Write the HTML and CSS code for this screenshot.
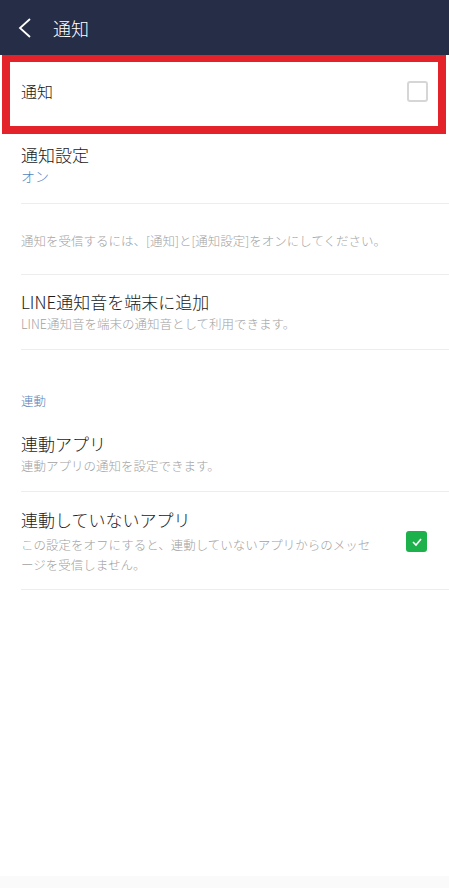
FILE: index.html
```html
<!doctype html>
<html lang="ja">
<head>
    <meta charset="UTF-8">
    <meta name="viewport" content="width=device-width, initial-scale=1.0">
    <title>通知</title>
    <link rel="stylesheet" href="styles.css">
</head>
<body>

<div class="screen">
    <div class="top-bar">
        <svg class="back" width="20" height="24" viewBox="0 0 20 24">
            <polyline points="12,3 2,12 12,21" fill="none" stroke="#fff" stroke-width="1.8"/>
        </svg>
        <span class="top-title">通知</span>
    </div>

    <div class="settings">
        <div class="mark">
            <div class="row row-main">
                <span class="main-label">通知</span>
                <span class="check"></span>
            </div>
        </div>

        <div class="row row-setting">
            <div class="texts">
                <div class="title">通知設定</div>
                <div class="value">オン</div>
            </div>
        </div>

        <div class="note">通知を受信するには、[通知]と[通知設定]をオンにしてください。</div>

        <div class="row row-sound">
            <div class="texts">
                <div class="title">LINE通知音を端末に追加</div>
                <div class="sub">LINE通知音を端末の通知音として利用できます。</div>
            </div>
        </div>

        <div class="section">連動</div>

        <div class="row row-apps">
            <div class="texts">
                <div class="title">連動アプリ</div>
                <div class="sub">連動アプリの通知を設定できます。</div>
            </div>
        </div>

        <div class="row row-other">
            <div class="texts">
                <div class="title">連動していないアプリ</div>
                <div class="sub">この設定をオフにすると、連動していないアプリからのメッセ<br>ージを受信しません。</div>
            </div>
            <span class="check on">
                <svg width="12" height="10" viewBox="0 0 12 10">
                    <polyline points="2,5 5,8 10,2" fill="none" stroke="#fff" stroke-width="1.6"/>
                </svg>
            </span>
        </div>
    </div>

    <div class="nav-strip"></div>
</div>

</body>
</html>
```

FILE: styles.css
```css
* {
    padding: 0;
    margin: 0;
    box-sizing: border-box;
}

body {
    font-family: "Noto Sans CJK JP", "Noto Sans", sans-serif;
    font-weight: 300;
    background-color: #ffffff;
    color: #1a1a1a;
}

.screen {
    width: 449px;
    height: 888px;
    display: flex;
    flex-direction: column;
}

.top-bar {
    height: 55px;
    flex-shrink: 0;
    background-color: #252d47;
    display: flex;
    align-items: center;
    padding-left: 18px;
}

.top-bar .back {
    display: block;
    margin-right: 15px;
}

.top-bar .top-title {
    color: #ffffff;
    font-size: 18px;
    line-height: 24px;
}

.settings {
    flex: 1;
}

/* red frame around the first row */
.mark {
    margin: 0 3px 0 2px;
    border: 8px solid #e42229;
    border-top-width: 7px;
}

.row {
    display: flex;
    align-items: center;
    margin-left: 21px;
    padding-right: 22px;
    border-bottom: 1px solid #ededed;
}

.row-main {
    height: 64px;
    margin-left: 0;
    padding: 0 10px 6px 11px;
    border-bottom: none;
    justify-content: space-between;
}

.main-label {
    font-size: 16px;
    line-height: 22px;
}

.check {
    width: 21px;
    height: 21px;
    border: 2px solid #d6d6d6;
    border-radius: 3px;
    flex-shrink: 0;
}

.check.on {
    border: none;
    background-color: #1db14b;
    display: flex;
    align-items: center;
    justify-content: center;
}

.texts {
    flex: 1;
}

.title {
    font-size: 17px;
    line-height: 24px;
}

.value {
    font-size: 14px;
    line-height: 19px;
    color: #5783ba;
}

.sub {
    font-size: 12.5px;
    line-height: 19px;
    color: #a2a2a2;
}

.row-setting {
    padding-top: 9px;
    padding-bottom: 17px;
}

.note {
    margin-left: 21px;
    padding: 28px 0 24px;
    font-size: 12.5px;
    line-height: 18px;
    color: #a2a2a2;
    border-bottom: 1px solid #ededed;
}

.row-sound {
    padding-top: 15px;
    padding-bottom: 16px;
}

.section {
    padding: 42px 0 11px 21px;
    font-size: 12.5px;
    line-height: 18px;
    color: #5783ba;
}

.row-apps {
    padding-top: 11px;
    padding-bottom: 16px;
}

.row-other {
    padding-top: 16px;
    padding-bottom: 14px;
}

.row-other .texts {
    padding-right: 26px;
}

.row-other .title {
    margin-bottom: 3px;
}

.row-other .sub {
    line-height: 20px;
}

.nav-strip {
    height: 12px;
    flex-shrink: 0;
    background-color: #fafafa;
}
```
